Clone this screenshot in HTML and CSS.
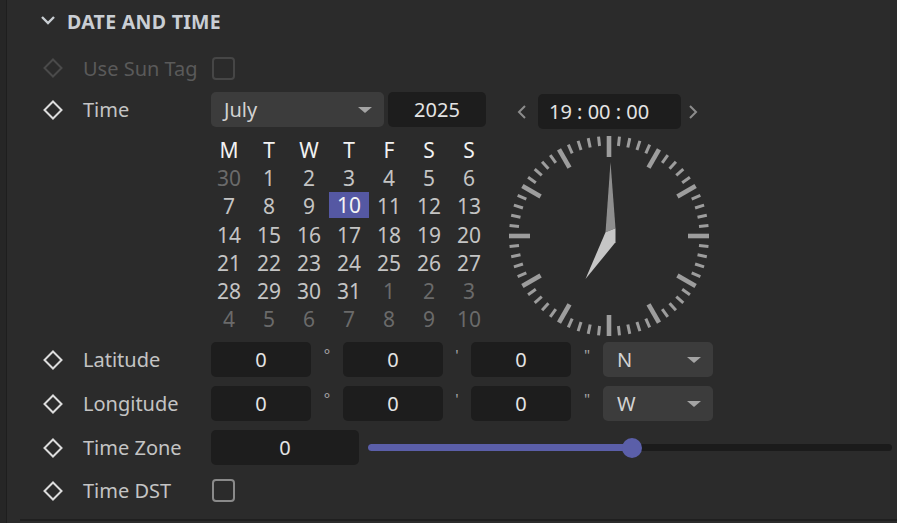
FILE: index.html
```html
<!DOCTYPE html>
<html>
<head>
<meta charset="utf-8">
<link rel="stylesheet" href="styles.css">
</head>
<body>
<div class="app">
  <div class="gutter"></div>
  <div class="content">
    <div class="header">
      <svg class="chev" width="16" height="10" viewBox="0 0 16 10"><polyline points="2,2 8,8 14,2" /></svg>
      <span class="title">DATE AND TIME</span>
    </div>

    <div class="row sun">
      <svg class="key dimkey" width="20" height="20" viewBox="0 0 20 20"><polygon points="10,1.5 18.5,10 10,18.5 1.5,10"/></svg>
      <span class="label dim">Use Sun Tag</span>
      <span class="check dimcheck"></span>
    </div>

    <div class="row timerow">
      <svg class="key" width="20" height="20" viewBox="0 0 20 20"><polygon points="10,1.5 18.5,10 10,18.5 1.5,10"/></svg>
      <span class="label">Time</span>
      <div class="timebody">
        <div class="datecol">
          <div class="selectors">
            <div class="dropdown month"><span>July</span><span class="tri"></span></div>
            <div class="field year">2025</div>
          </div>
          <div class="cal">
            <span class="dh">M</span><span class="dh">T</span><span class="dh">W</span><span class="dh">T</span><span class="dh">F</span><span class="dh">S</span><span class="dh">S</span>
            <span class="d o">30</span><span class="d">1</span><span class="d">2</span><span class="d">3</span><span class="d">4</span><span class="d">5</span><span class="d">6</span>
            <span class="d">7</span><span class="d">8</span><span class="d">9</span><span class="d sel"><span>10</span></span><span class="d">11</span><span class="d">12</span><span class="d">13</span>
            <span class="d">14</span><span class="d">15</span><span class="d">16</span><span class="d">17</span><span class="d">18</span><span class="d">19</span><span class="d">20</span>
            <span class="d">21</span><span class="d">22</span><span class="d">23</span><span class="d">24</span><span class="d">25</span><span class="d">26</span><span class="d">27</span>
            <span class="d">28</span><span class="d">29</span><span class="d">30</span><span class="d">31</span><span class="d o">1</span><span class="d o">2</span><span class="d o">3</span>
            <span class="d o">4</span><span class="d o">5</span><span class="d o">6</span><span class="d o">7</span><span class="d o">8</span><span class="d o">9</span><span class="d o">10</span>
          </div>
        </div>
        <div class="clockcol">
          <div class="timeinput">
            <svg class="arrow" width="10" height="16" viewBox="0 0 10 16"><polyline points="8,2 2,8 8,14"/></svg>
            <div class="field clocktext">19 : 00 : 00</div>
            <svg class="arrow" width="10" height="16" viewBox="0 0 10 16"><polyline points="2,2 8,8 2,14"/></svg>
          </div>
          <svg class="clock" width="200" height="200" viewBox="-100 -100 200 200">
            <defs>
              <g id="t5">
                <line class="maj" x1="0" y1="-100" x2="0" y2="-79"/>
                <line class="min" x1="0" y1="-100" x2="0" y2="-90.5" transform="rotate(6)"/>
                <line class="min" x1="0" y1="-100" x2="0" y2="-90.5" transform="rotate(12)"/>
                <line class="min" x1="0" y1="-100" x2="0" y2="-90.5" transform="rotate(18)"/>
                <line class="min" x1="0" y1="-100" x2="0" y2="-90.5" transform="rotate(24)"/>
              </g>
            </defs>
            <use href="#t5"/>
            <use href="#t5" transform="rotate(30)"/>
            <use href="#t5" transform="rotate(60)"/>
            <use href="#t5" transform="rotate(90)"/>
            <use href="#t5" transform="rotate(120)"/>
            <use href="#t5" transform="rotate(150)"/>
            <use href="#t5" transform="rotate(180)"/>
            <use href="#t5" transform="rotate(210)"/>
            <use href="#t5" transform="rotate(240)"/>
            <use href="#t5" transform="rotate(270)"/>
            <use href="#t5" transform="rotate(300)"/>
            <use href="#t5" transform="rotate(330)"/>
            <polygon class="mhand" points="1.5,-74 -3.5,-3.7 6.5,-7.7"/>
            <polygon class="hhand" points="-23.5,43 -3.5,-3.7 6.5,-7.7 6.5,6.3"/>
          </svg>
        </div>
      </div>
    </div>

    <div class="row ctl">
      <svg class="key" width="20" height="20" viewBox="0 0 20 20"><polygon points="10,1.5 18.5,10 10,18.5 1.5,10"/></svg>
      <span class="label">Latitude</span>
      <div class="field num">0</div><span class="sym w32">°</span>
      <div class="field num">0</div><span class="sym w28">'</span>
      <div class="field num">0</div><span class="sym w32">"</span>
      <div class="dropdown dir"><span>N</span><span class="tri"></span></div>
    </div>

    <div class="row ctl">
      <svg class="key" width="20" height="20" viewBox="0 0 20 20"><polygon points="10,1.5 18.5,10 10,18.5 1.5,10"/></svg>
      <span class="label">Longitude</span>
      <div class="field num">0</div><span class="sym w32">°</span>
      <div class="field num">0</div><span class="sym w28">'</span>
      <div class="field num">0</div><span class="sym w32">"</span>
      <div class="dropdown dir"><span>W</span><span class="tri"></span></div>
    </div>

    <div class="row ctl">
      <svg class="key" width="20" height="20" viewBox="0 0 20 20"><polygon points="10,1.5 18.5,10 10,18.5 1.5,10"/></svg>
      <span class="label">Time Zone</span>
      <div class="field tz">0</div>
      <div class="slider">
        <div class="track"><div class="fill" style="width: 50.4%"></div><div class="knob" style="left: 50.4%"></div></div>
      </div>
    </div>

    <div class="row ctl dst">
      <svg class="key" width="20" height="20" viewBox="0 0 20 20"><polygon points="10,1.5 18.5,10 10,18.5 1.5,10"/></svg>
      <span class="label">Time DST</span>
      <span class="check"></span>
    </div>

    <div class="bottomline"></div>
  </div>
</div>
</body>
</html>
```
FILE: styles.css
```css
* { box-sizing: border-box; }
html, body { margin: 0; padding: 0; }
body {
  background: #2b2b2b;
  font-family: "Noto Sans", "Open Sans", sans-serif;
  font-size: 20px;
  color: #c6c6c6;
  width: 897px;
  height: 523px;
  overflow: hidden;
}
.app { display: flex; height: 523px; }
.gutter {
  width: 7px;
  flex: none;
  background: #262626;
  border-right: 1px solid #1e1e1e;
}
.content { flex: 1; display: flex; flex-direction: column; position: relative; }

.header {
  display: flex;
  align-items: center;
  height: 44px;
  padding-left: 33px;
  padding-bottom: 1px;
}
.chev { fill: none; stroke: #c9ced3; stroke-width: 2.4; margin-right: 11px; margin-top: -4px; }
.title { font-weight: 700; font-size: 19.5px; color: #c9ced4; letter-spacing: 0.3px; }

.row { display: flex; align-items: center; }
.key { flex: none; margin-left: 36px; margin-right: 20px; fill: none; stroke: #dcdcdc; stroke-width: 2; }
.dimkey { stroke: #4a4a4a; }
.label { width: 128px; flex: none; color: #c4c4c4; }
.dim { color: #5a5a5a; }

.sun { height: 48px; }
.check {
  width: 23px; height: 23px; margin-left: 1px;
  border: 2.5px solid #8a8a8a; border-radius: 4px;
}
.dimcheck { border-color: #464646; border-width: 2px; }

.timerow { align-items: flex-start; }
.timerow .key, .timerow .label { margin-top: 8px; }
.timerow .label { line-height: 20px; }
.timebody { display: flex; }
.datecol { display: flex; flex-direction: column; }
.selectors { display: flex; gap: 4px; height: 35px; }
.dropdown {
  display: flex; align-items: center; justify-content: space-between;
  background: #3c3c3c; border-radius: 5px; color: #d2d2d2;
  padding: 0 12px 0 13px;
}
.month { width: 173px; }
.tri {
  width: 0; height: 0;
  border-left: 7px solid transparent; border-right: 7px solid transparent;
  border-top: 6px solid #a4a4a4;
}
.field {
  background: #1d1d1d; border-radius: 5px; color: #e4e4e4;
  display: flex; align-items: center; justify-content: center;
  height: 35px;
}
.year { width: 98px; }

.cal {
  display: grid;
  grid-template-columns: repeat(7, 40px);
  grid-auto-rows: 28.2px;
  margin-top: 9px;
  margin-left: -2px;
  font-size: 21px;
}
.cal span { display: flex; align-items: center; justify-content: center; }
.dh { color: #f2f2f2; }
.d { color: #c4c4c4; }
.d.o { color: #6a6a6a; }
.d.sel span {
  background: #5558a3; color: #f4f4f4;
  width: 40px; height: 26px; margin-top: -3px;
}

.clockcol { display: flex; flex-direction: column; align-items: center; width: 200px; margin-left: 20px; }
.timeinput { display: flex; align-items: center; margin-top: 2px; margin-left: -3px; }
.arrow { fill: none; stroke: #8c8c8c; stroke-width: 2; }
.clocktext { width: 143px; justify-content: flex-start; padding-left: 11px; margin: 0 7px 0 11px; }
.clock { margin-top: 7px; margin-left: -1px; margin-bottom: -3px; }
.maj { stroke: #9d9d9d; stroke-width: 4.6; }
.min { stroke: #9d9d9d; stroke-width: 3; }
.mhand { fill: #8e8e8e; }
.hhand { fill: #c6c6c6; }

.ctl { height: 35px; margin-top: 9px; }
.timerow + .ctl { margin-top: 9px; }
.num { width: 100px; }
.sym { flex: none; text-align: center; align-self: flex-start; font-size: 15px; color: #a6a6a6; padding-top: 2px; }
.w32 { width: 32px; }
.w28 { width: 28px; }
.dir { width: 110px; height: 35px; padding-left: 14px; }

.tz { width: 148px; }
.slider { flex: 1; padding-left: 9px; padding-right: 5px; }
.track { position: relative; height: 7px; background: #1b1b1b; border-radius: 4px; }
.fill { height: 7px; background: #5b5fa9; border-radius: 4px; }
.knob {
  position: absolute; top: 50%;
  width: 20px; height: 20px; margin: -10px 0 0 -10px;
  border-radius: 50%; background: #5b5fa9;
}

.dst { margin-top: 8px; }
.bottomline { margin-top: auto; margin-bottom: 2px; margin-left: 13px; height: 2px; background: #1f1f1f; }
```
